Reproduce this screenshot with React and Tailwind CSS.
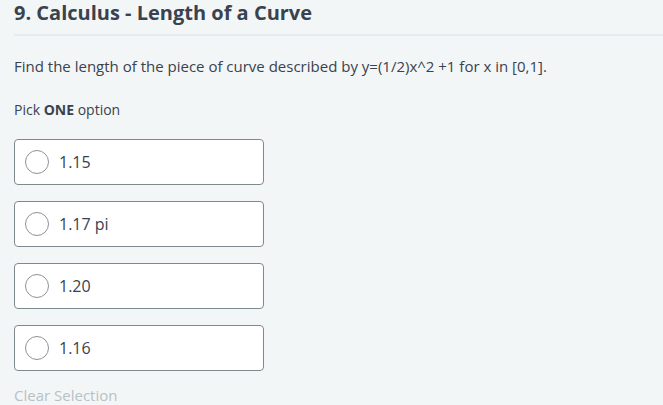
import React, { useState } from "react";

const OPTIONS = ["1.15", "1.17 pi", "1.20", "1.16"];

const App = () => {
  const [picked, setPicked] = useState(null);

  return (
    <div className="min-h-[405px] bg-[#f3f6f7] pl-[14px] font-['Open_Sans',sans-serif] text-[#39424e]">
      {/* Titre */}
      <h2 className="pb-[8px] text-[20px] leading-[26px] font-bold border-b-2 border-[#e6ebed]">
        9. Calculus - Length of a Curve
      </h2>

      <p className="mt-[20px] text-[15px] leading-[20px] text-[#39424e]">
        Find the length of the piece of curve described by y=(1/2)x^2 +1 for x in [0,1].
      </p>

      <p className="mt-[24px] text-[14px] leading-[20px] text-[#39424e]">
        Pick <span className="font-bold">ONE</span> option
      </p>

      {/* Options */}
      <div className="mt-[19px] flex flex-col gap-[16px]">
        {OPTIONS.map((o, i) => (
          <label
            key={o}
            onClick={() => setPicked(i)}
            className="flex h-[46px] w-[250px] items-center gap-[10px] rounded-[4px] border border-[#7f8a8e] bg-white pl-[10px] cursor-pointer"
          >
            <span className="flex h-[24px] w-[24px] items-center justify-center rounded-full border border-[#8a9396]">
              {picked === i && <span className="h-[12px] w-[12px] rounded-full bg-[#39424e]" />}
            </span>
            <span className="text-[16px] leading-[20px] text-[#39424e]">{o}</span>
          </label>
        ))}
      </div>

      <button
        onClick={() => setPicked(null)}
        className="mt-[14px] text-[15px] leading-[20px] text-[#b7c1c5]"
      >
        Clear Selection
      </button>
    </div>
  );
};

export default App;
